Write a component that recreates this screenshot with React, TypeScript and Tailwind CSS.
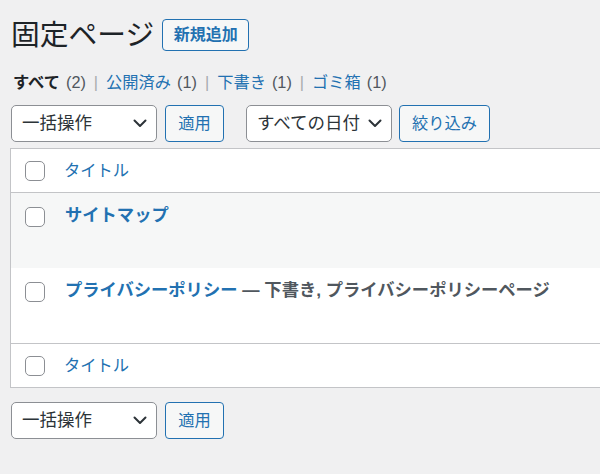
import React from "react";

const Chevron = () => (
  <svg width="14" height="9" viewBox="0 0 14 9" className="shrink-0">
    <polyline points="1.5,1.5 7,7 12.5,1.5" fill="none" stroke="#2c3338" strokeWidth="2" strokeLinecap="round" strokeLinejoin="round" />
  </svg>
);

const Select = ({ label, w }: { label: string; w: string }) => (
  <div className={`${w} h-[37px] bg-white border border-[#8c8f94] rounded-[5px] flex items-center justify-between pl-[10px] pr-[9px] text-[17.5px] text-[#2c3338]`}>
    <span>{label}</span>
    <Chevron />
  </div>
);

const Btn = ({ label, w }: { label: string; w: string }) => (
  <div className={`${w} h-[37px] bg-[#f6f7f7] border border-[#2271b1] rounded-[4px] flex items-center justify-center text-[16.25px] text-[#2271b1]`}>
    {label}
  </div>
);

const Check = () => (
  <div className="w-[20px] h-[20px] bg-white border border-[#8c8f94] rounded-[5px] shrink-0" />
);

const Sep = () => <span className="mx-[8px] text-[#a7aaad]">|</span>;

export default function App() {
  return (
    <div className="w-[600px] h-[474px] bg-[#f0f0f1] overflow-hidden text-[#1d2327] font-['Liberation_Sans','Noto_Sans_CJK_JP',sans-serif]">
      <div className="pl-[10px]">
        <div className="flex items-center h-[38px] mt-[16px]">
          <h1 className="text-[28.75px] leading-[38px] font-normal ml-[1px] text-[#1d2327]">固定ページ</h1>
          <div className="ml-[8px] w-[87px] h-[32px] bg-[#f6f7f7] border border-[#2271b1] rounded-[4px] flex items-center justify-center text-[16px] font-semibold text-[#2271b1]">
            新規追加
          </div>
        </div>

        <div className="flex items-center h-[28px] mt-[14px] ml-[3px] text-[16.25px] whitespace-nowrap">
          <span className="font-bold text-[#1d2327]">すべて</span>
          <span className="ml-[6px] text-[#50575e]">(2)</span>
          <Sep />
          <span className="text-[#2271b1]">公開済み</span>
          <span className="ml-[6px] text-[#50575e]">(1)</span>
          <Sep />
          <span className="text-[#2271b1]">下書き</span>
          <span className="ml-[6px] text-[#50575e]">(1)</span>
          <Sep />
          <span className="text-[#2271b1]">ゴミ箱</span>
          <span className="ml-[6px] text-[#50575e]">(1)</span>
        </div>

        <div className="flex items-start mt-[9px] ml-[1px]">
          <Select label="一括操作" w="w-[146px]" />
          <div className="ml-[8px]"><Btn label="適用" w="w-[59px]" /></div>
          <div className="ml-[22px]"><Select label="すべての日付" w="w-[146px]" /></div>
          <div className="ml-[7px]"><Btn label="絞り込み" w="w-[91px]" /></div>
        </div>

        <div className="mt-[6px] w-[640px] bg-white border border-[#c3c4c7]">
          <div className="h-[44px] flex items-center border-b border-[#c3c4c7]">
            <div className="ml-[14px]"><Check /></div>
            <span className="ml-[19px] text-[16.25px] text-[#2271b1]">タイトル</span>
          </div>
          <div className="h-[75px] bg-[#f6f7f7] flex items-start">
            <div className="ml-[14px] mt-[14px]"><Check /></div>
            <span className="ml-[20px] mt-[9px] text-[17.3px] leading-[26px] font-bold text-[#2271b1]">サイトマップ</span>
          </div>
          <div className="h-[75px] bg-white flex items-start whitespace-nowrap">
            <div className="ml-[14px] mt-[14px]"><Check /></div>
            <span className="ml-[20px] mt-[9px] text-[17.3px] leading-[26px] font-bold">
              <span className="text-[#2271b1]">プライバシーポリシー</span>
              <span className="text-[#50575e]"> — 下書き, プライバシーポリシーページ</span>
            </span>
          </div>
          <div className="h-[44px] flex items-center border-t border-[#c3c4c7]">
            <div className="ml-[14px]"><Check /></div>
            <span className="ml-[19px] text-[16.25px] text-[#2271b1]">タイトル</span>
          </div>
        </div>

        <div className="flex items-start mt-[14px] ml-[1px]">
          <Select label="一括操作" w="w-[146px]" />
          <div className="ml-[8px]"><Btn label="適用" w="w-[59px]" /></div>
        </div>
      </div>
    </div>
  );
}
